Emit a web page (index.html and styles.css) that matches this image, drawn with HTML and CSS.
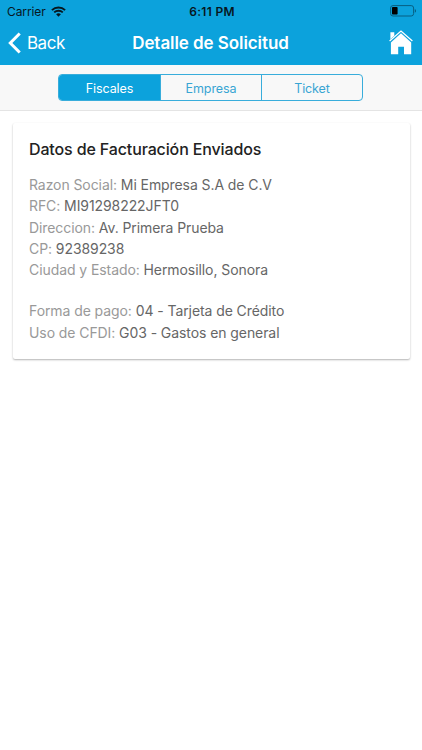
FILE: index.html
```html
<!DOCTYPE html>
<html lang="es">
<head>
  <meta charset="UTF-8" />
  <meta name="viewport" content="width=device-width, initial-scale=1" />
  <title>Detalle de Solicitud</title>
  <link rel="stylesheet" href="styles.css">
</head>
<body>

<header class="header">
  <div class="status">
    <div class="carrier">
      <span>Carrier</span>
      <svg class="wifi" viewBox="0 0 15 11" width="15" height="11">
        <path d="M0.9 4.1a9.6 9.6 0 0 1 13.2 0M3.2 6.4a6.3 6.3 0 0 1 8.6 0" fill="none" stroke="#07171f" stroke-width="1.9"/>
        <path d="M7.5 10.7L5.1 8.3a3.5 3.5 0 0 1 4.8 0z" fill="#07171f"/>
      </svg>
    </div>
    <span class="clock">6:11 PM</span>
    <svg class="battery" viewBox="0 0 27 12" width="27" height="12">
      <rect x="0.6" y="0.6" width="23" height="10.4" rx="2.4" fill="none" stroke="#075f82" stroke-width="1"/>
      <rect x="2" y="2" width="5.6" height="7.6" rx="0.8" fill="#000"/>
      <path d="M24.8 3.9c1.7.5 1.7 3.3 0 3.8z" fill="#075f82"/>
    </svg>
  </div>
  <div class="navbar">
    <a class="back">
      <svg viewBox="0 0 14 22" width="14" height="22">
        <path d="M11.7 1.5L2.3 11l9.4 9.5" fill="none" stroke="#fff" stroke-width="3"/>
      </svg>
      <span>Back</span>
    </a>
    <h1>Detalle de Solicitud</h1>
    <a class="home">
      <svg viewBox="0 0 24 25" width="24" height="25">
        <path d="M1.4 2.2h3.9v3.6L1.4 9.2zM12 3.3l10.2 9.1V24.3h-7.2v-7.6H9.2v7.6H1.9V12.4z" fill="#fff"/>
        <path d="M0.6 11L12 1.1l11.4 9.9" fill="none" stroke="#fff" stroke-width="1.3"/>
      </svg>
    </a>
  </div>
</header>

<nav class="tabs">
  <div class="segment">
    <button class="active">Fiscales</button>
    <button>Empresa</button>
    <button>Ticket</button>
  </div>
</nav>

<main class="card">
  <h2>Datos de Facturación Enviados</h2>
  <div class="datos">
    <p>Razon Social: <span>Mi Empresa S.A de C.V</span></p>
    <p>RFC: <span>MI91298222JFT0</span></p>
    <p>Direccion: <span>Av. Primera Prueba</span></p>
    <p>CP: <span>92389238</span></p>
    <p>Ciudad y Estado: <span>Hermosillo, Sonora</span></p>
  </div>
  <div class="datos">
    <p>Forma de pago: <span>04 - Tarjeta de Crédito</span></p>
    <p>Uso de CFDI: <span>G03 - Gastos en general</span></p>
  </div>
</main>

</body>
</html>
```
FILE: styles.css
```css
* {
  box-sizing: border-box;
}

body {
  margin: 0;
  min-height: 750px;
  background-color: #fff;
  font-family: Inter, sans-serif;
}

.header {
  height: 65px;
  background-color: #0ca2dc;
  box-shadow: 0 1px 0 #b5e4f6;
}

.status {
  display: grid;
  grid-template-columns: 1fr auto 1fr;
  align-items: center;
  height: 22px;
  padding: 0 5px 0 7px;
  font-size: 12px;
  color: #07171f;
}

.carrier {
  display: flex;
  align-items: center;
  gap: 5px;
  letter-spacing: -0.1px;
}

.clock {
  font-weight: 600;
  letter-spacing: 0.3px;
}

.battery {
  justify-self: end;
}

.navbar {
  display: grid;
  grid-template-columns: 1fr auto 1fr;
  align-items: center;
  height: 43px;
  padding: 0 9px 2px 8px;
  color: #fff;
}

.back {
  display: flex;
  align-items: center;
  gap: 5px;
  font-size: 17px;
  letter-spacing: -0.5px;
}

.navbar h1 {
  margin: 0;
  font-size: 17px;
  font-weight: 600;
  letter-spacing: -0.07px;
}

.home {
  display: flex;
  justify-self: end;
}

.tabs {
  display: flex;
  justify-content: center;
  height: 46px;
  padding: 9px 1px 0 0;
  background-color: #f8f8f8;
  border-bottom: 1px solid #e4e4e4;
}

.segment {
  display: grid;
  grid-template-columns: repeat(3, 1fr);
  width: 305px;
  height: 27px;
  border: 1px solid #38addb;
  border-radius: 4px;
  overflow: hidden;
}

.segment button {
  padding: 2px 0 0;
  border: none;
  border-left: 1px solid #38addb;
  background: none;
  font-family: inherit;
  font-size: 12.5px;
  letter-spacing: -0.1px;
  color: #38a5d3;
}

.segment button:first-child {
  border-left: none;
}

.segment .active {
  background-color: #0ca2dc;
  color: #fff;
}

.card {
  height: 236px;
  margin: 12px 12.5px 0;
  padding: 15px 16.5px;
  background-color: #fff;
  border-radius: 2px;
  box-shadow: 0 1px 2px rgba(0, 0, 0, 0.3);
}

.card h2 {
  margin: 0 0 14px;
  font-size: 16px;
  font-weight: 500;
  letter-spacing: -0.13px;
  line-height: 22px;
  color: #222;
}

.datos {
  margin-bottom: 20px;
  font-size: 14px;
  letter-spacing: -0.08px;
  line-height: 21.3px;
  color: #999;
}

.datos p {
  margin: 0;
}

.datos span {
  color: #666;
}
```
